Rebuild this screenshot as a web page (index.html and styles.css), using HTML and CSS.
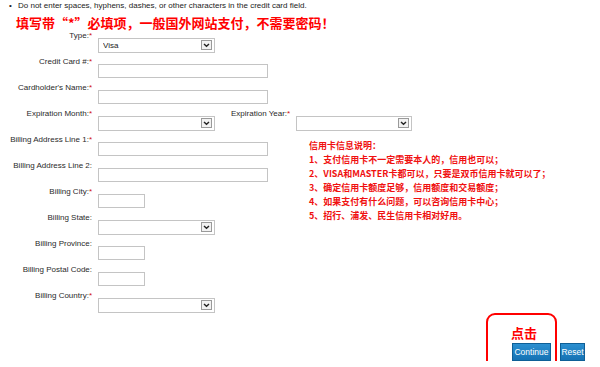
FILE: index.html
```html
<!DOCTYPE html>
<html lang="zh-CN">
  <head>
    <meta charset="UTF-8" />
    <title>Credit Card</title>
    <link rel="stylesheet" href="styles.css">
  </head>
  <body>
    <div class="note"><span class="dot">&bull;</span>Do not enter spaces, hyphens, dashes, or other characters in the credit card field.</div>
    <h1 class="warn">填写带“*”必填项，一般国外网站支付，不需要密码！</h1>
    <form class="card-form">
      <label class="lbl">Type:<em>*</em></label>
      <div class="fld">
        <span class="sel"><select><option>Visa</option></select><svg class="arrow" width="11" height="10" viewBox="0 0 11 10"><rect x="0.5" y="0.5" width="10" height="9" fill="#f2f2f2" stroke="#9a9a9a"/><path d="M3 4 L5.5 6.3 L8 4" fill="none" stroke="#222" stroke-width="1.4"/></svg></span>
      </div>

      <label class="lbl">Credit Card #:<em>*</em></label>
      <div class="fld"><input class="txt" type="text"></div>

      <label class="lbl">Cardholder's Name:<em>*</em></label>
      <div class="fld"><input class="txt" type="text"></div>

      <label class="lbl">Expiration Month:<em>*</em></label>
      <div class="fld fld-wide">
        <span class="sel"><select><option></option></select><svg class="arrow" width="11" height="10" viewBox="0 0 11 10"><rect x="0.5" y="0.5" width="10" height="9" fill="#f2f2f2" stroke="#9a9a9a"/><path d="M3 4 L5.5 6.3 L8 4" fill="none" stroke="#222" stroke-width="1.4"/></svg></span>
        <label class="lbl lbl-inline">Expiration Year:<em>*</em></label>
        <span class="sel"><select><option></option></select><svg class="arrow" width="11" height="10" viewBox="0 0 11 10"><rect x="0.5" y="0.5" width="10" height="9" fill="#f2f2f2" stroke="#9a9a9a"/><path d="M3 4 L5.5 6.3 L8 4" fill="none" stroke="#222" stroke-width="1.4"/></svg></span>
      </div>

      <label class="lbl">Billing Address Line 1:<em>*</em></label>
      <div class="fld"><input class="txt" type="text"></div>

      <div class="info">
        <p>信用卡信息说明：</p>
        <p>1、支付信用卡不一定需要本人的，信用也可以；</p>
        <p>2、VISA和MASTER卡都可以，只要是双币信用卡就可以了；</p>
        <p>3、确定信用卡额度足够，信用额度和交易额度；</p>
        <p>4、如果支付有什么问题，可以咨询信用卡中心；</p>
        <p>5、招行、浦发、民生信用卡相对好用。</p>
      </div>

      <label class="lbl">Billing Address Line 2:</label>
      <div class="fld"><input class="txt" type="text"></div>

      <label class="lbl">Billing City:<em>*</em></label>
      <div class="fld"><input class="txt short" type="text"></div>

      <label class="lbl">Billing State:</label>
      <div class="fld">
        <span class="sel"><select><option></option></select><svg class="arrow" width="11" height="10" viewBox="0 0 11 10"><rect x="0.5" y="0.5" width="10" height="9" fill="#f2f2f2" stroke="#9a9a9a"/><path d="M3 4 L5.5 6.3 L8 4" fill="none" stroke="#222" stroke-width="1.4"/></svg></span>
      </div>

      <label class="lbl">Billing Province:</label>
      <div class="fld"><input class="txt short" type="text"></div>

      <label class="lbl">Billing Postal Code:</label>
      <div class="fld"><input class="txt short" type="text"></div>

      <label class="lbl">Billing Country:<em>*</em></label>
      <div class="fld">
        <span class="sel"><select><option></option></select><svg class="arrow" width="11" height="10" viewBox="0 0 11 10"><rect x="0.5" y="0.5" width="10" height="9" fill="#f2f2f2" stroke="#9a9a9a"/><path d="M3 4 L5.5 6.3 L8 4" fill="none" stroke="#222" stroke-width="1.4"/></svg></span>
      </div>
    </form>
    <div class="actions">
      <span class="click-wrap">
        <span class="mark">点击</span>
        <button class="btn btn-go" type="button">Continue</button>
      </span>
      <button class="btn btn-reset" type="button">Reset</button>
    </div>
  </body>
</html>
```

FILE: styles.css
```css
* {
  margin: 0;
  padding: 0;
  box-sizing: border-box;
}
body {
  background: #fff;
  font-family: "Liberation Sans", Arial, sans-serif;
  font-size: 8px;
  color: #333;
  overflow: hidden;
}
.note {
  padding: 1px 0 0 9px;
  line-height: 10px;
  color: #222;
}
.note .dot {
  display: inline-block;
  width: 9px;
}
.warn {
  margin: 4px 0 0 16px;
  font-family: "Noto Sans CJK SC", sans-serif;
  font-size: 13px;
  line-height: 16px;
  font-weight: bold;
  color: #f00;
}
.card-form {
  display: grid;
  grid-template-columns: 92px 217px 1fr;
  grid-auto-rows: 26px;
  margin-top: -1px;
}
.lbl {
  grid-column: 1;
  text-align: right;
  line-height: 10px;
  padding-top: 1px;
  color: #2a2a2a;
  white-space: nowrap;
}
.lbl em {
  font-style: normal;
  color: #d01010;
}
.fld {
  grid-column: 2;
  padding: 8px 0 0 6px;
}
.fld-wide {
  grid-column: 2 / 4;
  display: flex;
  align-items: flex-start;
}
.lbl-inline {
  margin: -8px 6px 0 16px;
}
.txt {
  display: block;
  width: 170px;
  height: 14px;
  border: 1px solid #c4c4c4;
  background: #fff;
}
.txt.short {
  width: 47px;
}
.sel {
  display: block;
  position: relative;
  width: 117px;
  height: 15px;
}
.fld-wide .sel {
  flex: none;
}
.fld-wide .sel + .lbl-inline + .sel {
  width: 116px;
}
.sel select {
  appearance: none;
  width: 100%;
  height: 15px;
  border: 1px solid #c4c4c4;
  background: #fff;
  font-family: "Liberation Sans", Arial, sans-serif;
  font-size: 8px;
  color: #222;
  padding-left: 4px;
}
.sel .arrow {
  position: absolute;
  right: 3px;
  top: 2px;
}
.info {
  grid-column: 3;
  grid-row: 5 / span 5;
  padding-top: 5px;
  font-family: "Noto Sans CJK SC", sans-serif;
  font-size: 9px;
  line-height: 14px;
  font-weight: bold;
  color: #f01010;
  white-space: nowrap;
}
.actions {
  display: flex;
  justify-content: flex-end;
  gap: 9px;
  margin-top: 27px;
  padding-right: 15px;
}
.click-wrap {
  position: relative;
}
.mark {
  position: absolute;
  left: -26px;
  top: -30px;
  width: 71px;
  height: 70px;
  border: 2px solid #f00;
  border-radius: 9px;
  padding: 10px 0 0 23px;
  font-family: "Noto Sans CJK SC", sans-serif;
  font-size: 13px;
  line-height: 16px;
  font-weight: bold;
  color: #f00;
}
.btn {
  position: relative;
  display: block;
  height: 18px;
  padding: 0;
  border: 1px solid #0e5f96;
  background: linear-gradient(#2b8fd0, #1572b4);
  color: #fff;
  font-family: "Liberation Sans", Arial, sans-serif;
  font-size: 8.5px;
}
.btn-go {
  width: 39px;
}
.btn-reset {
  width: 25px;
}
```
